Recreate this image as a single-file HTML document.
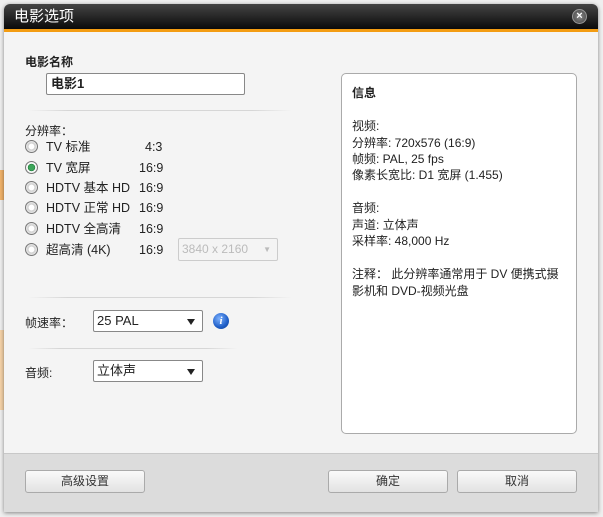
<!DOCTYPE html>
<html><head><meta charset="utf-8"><style>
*{margin:0;padding:0;box-sizing:border-box}
body{width:603px;height:517px;background:#efefef;position:relative;overflow:hidden;font-family:"Liberation Sans","Noto Sans CJK SC",sans-serif;font-size:12px;line-height:16px;color:#222}
.a{position:absolute}
.dlg{left:4px;top:4px;width:594px;height:508px;background:#f4f4f4;box-shadow:0 1px 4px rgba(0,0,0,.45);border-radius:6px 6px 0 0;overflow:hidden}
.title{left:0;top:0;width:594px;height:25px;background:linear-gradient(#444,#0a0a0a);color:#fff;font-size:15px;line-height:25px;padding-left:10px}
.orange{left:0;top:25px;width:594px;height:3px;background:#f39c12}
.close{left:568px;top:5px;width:15px;height:15px;border-radius:50%;background:radial-gradient(#888,#444);border:1px solid #999;color:#fff;font-size:11px;line-height:13px;text-align:center;font-weight:bold}
.sep{height:1px;background:linear-gradient(90deg,rgba(0,0,0,0),#d6d6d6 15%,#d6d6d6 85%,rgba(0,0,0,0))}
.radio{width:13px;height:13px;border-radius:50%;border:1px solid #777;background:radial-gradient(#fff 35%,#ccc 40%,#e8e8e8 70%)}
.radio.on{background:radial-gradient(#3da55a 35%,#1e7a38 45%,#fff 50%,#eee 70%)}
.lb{font-size:12.5px}
.sel{height:22px;border:1px solid #888;background:#fff;border-radius:2px;font-size:13px;line-height:20px;padding-left:3px}
.sel:after{content:"";position:absolute;right:7px;top:8px;border-left:4px solid transparent;border-right:4px solid transparent;border-top:6px solid #222}
.btn{height:23px;border:1px solid #aaa;border-radius:3px;background:linear-gradient(#fafafa,#e2e2e2);text-align:center;line-height:21px;font-size:12px;color:#333}
</style></head><body>
<div class="a" style="left:0;top:170px;width:5px;height:30px;background:#f2b36a"></div>
<div class="a" style="left:0;top:330px;width:5px;height:80px;background:#f6d3a8"></div>
<div class="a dlg">
<div class="a title">电影选项</div>
<div class="a orange"></div>
<div class="a close">×</div>
<div class="a" style="left:21px;top:50px;font-weight:bold;font-size:12px">电影名称</div>
<div class="a" style="left:42px;top:69px;width:199px;height:22px;border:1px solid #888;background:#fff;border-radius:2px;font-weight:bold;font-size:13px;line-height:20px;padding-left:4px">电影1</div>
<div class="a sep" style="left:24px;top:106px;width:264px"></div>
<div class="a" style="left:21px;top:119px">分辨率：</div>
<div class="a radio" style="left:21px;top:136px"></div><div class="a lb" style="left:42px;top:135px">TV 标准</div><div class="a lb" style="left:141px;top:135px">4:3</div>
<div class="a radio on" style="left:21px;top:157px"></div><div class="a lb" style="left:42px;top:156px">TV 宽屏</div><div class="a lb" style="left:135px;top:156px">16:9</div>
<div class="a radio" style="left:21px;top:177px"></div><div class="a lb" style="left:42px;top:176px">HDTV 基本 HD</div><div class="a lb" style="left:135px;top:176px">16:9</div>
<div class="a radio" style="left:21px;top:197px"></div><div class="a lb" style="left:42px;top:196px">HDTV 正常 HD</div><div class="a lb" style="left:135px;top:196px">16:9</div>
<div class="a radio" style="left:21px;top:218px"></div><div class="a lb" style="left:42px;top:217px">HDTV 全高清</div><div class="a lb" style="left:135px;top:217px">16:9</div>
<div class="a radio" style="left:21px;top:239px"></div><div class="a lb" style="left:42px;top:238px">超高清 (4K)</div><div class="a lb" style="left:135px;top:238px">16:9</div>
<div class="a" style="left:174px;top:234px;width:100px;height:23px;border:1px solid #ccc;border-radius:2px;color:#bbb;font-size:12px;line-height:21px;padding-left:3px">3840 x 2160<span style="position:absolute;right:6px;top:0;font-size:8px;color:#bbb">▼</span></div>
<div class="a sep" style="left:24px;top:293px;width:264px"></div>
<div class="a" style="left:21px;top:311px">帧速率：</div>
<div class="a sel" style="left:89px;top:306px;width:110px">25 PAL</div>
<div class="a" style="left:209px;top:309px;width:16px;height:16px;border-radius:50%;background:radial-gradient(circle at 40% 35%,#7fb3ff,#1f5fc8 60%,#103d8a);color:#fff;font:bold italic 11px 'Liberation Serif',serif;text-align:center;line-height:16px">i</div>
<div class="a sep" style="left:24px;top:344px;width:210px"></div>
<div class="a" style="left:21px;top:361px">音频:</div>
<div class="a sel" style="left:89px;top:356px;width:110px">立体声</div>
<div class="a" style="left:337px;top:69px;width:236px;height:361px;background:#fff;border:1px solid #aaa;border-radius:5px;padding:11px 0 0 10px;line-height:16.3px;font-size:12px">
<div style="font-weight:bold">信息</div><div style="height:17px"></div>
<div>视频:</div><div>分辨率: 720x576 (16:9)</div><div>帧频: PAL, 25 fps</div><div>像素长宽比: D1 宽屏 (1.455)</div><div style="height:17px"></div>
<div>音频:</div><div>声道: 立体声</div><div>采样率: 48,000 Hz</div><div style="height:17px"></div>
<div>注释： 此分辨率通常用于 DV 便携式摄<br>影机和 DVD-视频光盘</div>
</div>
<div class="a" style="left:0;top:449px;width:594px;height:59px;background:#dcdcdc;border-top:1px solid #c8c8c8"></div>
<div class="a btn" style="left:21px;top:466px;width:120px">高级设置</div>
<div class="a btn" style="left:324px;top:466px;width:120px">确定</div>
<div class="a btn" style="left:453px;top:466px;width:120px">取消</div>
</div>
</body></html>
